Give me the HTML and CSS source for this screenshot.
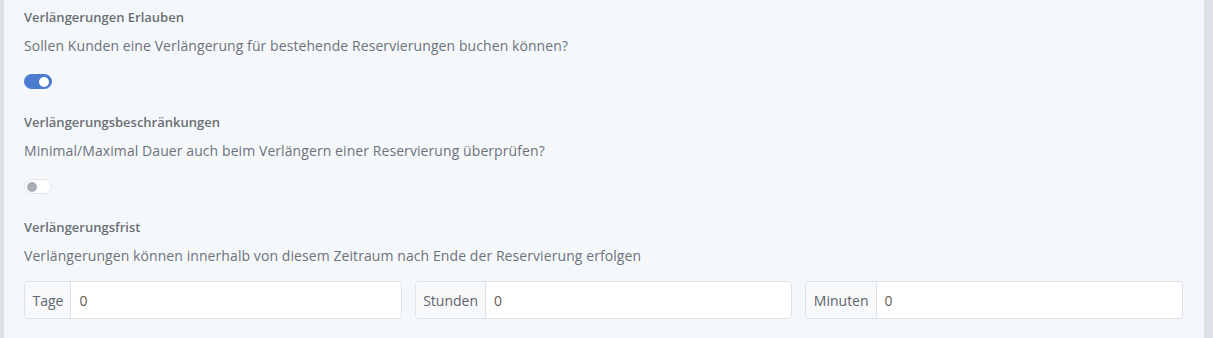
FILE: index.html
```html
<!DOCTYPE html>
<html lang="de">
<head>
<meta charset="utf-8">
<link rel="stylesheet" href="styles.css">
</head>
<body>
<div class="frame">
  <div class="panel">
    <section class="setting">
      <h3 class="title">Verlängerungen Erlauben</h3>
      <p class="desc">Sollen Kunden eine Verlängerung für bestehende Reservierungen buchen können?</p>
      <span class="toggle on"><span class="knob"></span></span>
    </section>
    <section class="setting">
      <h3 class="title">Verlängerungsbeschränkungen</h3>
      <p class="desc">Minimal/Maximal Dauer auch beim Verlängern einer Reservierung überprüfen?</p>
      <span class="toggle"><span class="knob"></span></span>
    </section>
    <section class="setting last">
      <h3 class="title">Verlängerungsfrist</h3>
      <p class="desc">Verlängerungen können innerhalb von diesem Zeitraum nach Ende der Reservierung erfolgen</p>
      <div class="inputs">
        <div class="group"><span class="addon">Tage</span><span class="field">0</span></div>
        <div class="group"><span class="addon">Stunden</span><span class="field">0</span></div>
        <div class="group"><span class="addon">Minuten</span><span class="field">0</span></div>
      </div>
    </section>
  </div>
</div>
</body>
</html>
```

FILE: styles.css
```css
* { box-sizing: border-box; }
html, body { margin: 0; padding: 0; }
body {
  font-family: "Open Sans", "Noto Sans", sans-serif;
  background: #dde1e7;
  height: 338px;
  overflow: hidden;
}
.frame {
  padding: 0 9px 0 4px;
  height: 338px;
}
.panel {
  background: #f5f8fb;
  height: 100%;
  padding: 8px 21px 0 20px;
}
.setting {
  height: 105px;
}
.title {
  margin: 0;
  font-size: 13px;
  font-weight: 600;
  color: #6a6e75;
  line-height: 18px;
}
.desc {
  margin: 10px 0 0;
  font-size: 14px;
  letter-spacing: 0.08px;
  color: #6c727a;
  line-height: 20px;
}
.toggle {
  display: block;
  margin-top: 18px;
  width: 28px;
  height: 15px;
  border-radius: 8px;
  border: 1px solid #dfe3e8;
  background: #fff;
  position: relative;
}
.toggle .knob {
  position: absolute;
  top: 1.5px;
  left: 1.5px;
  width: 10px;
  height: 10px;
  border-radius: 50%;
  background: #a9adb4;
}
.toggle.on {
  background: #4a7bd0;
  border-color: #4a7bd0;
}
.toggle.on .knob {
  left: auto;
  right: 2px;
  background: #fff;
}
.inputs {
  margin-top: 15px;
  display: grid;
  grid-template-columns: 1fr 1fr 1fr;
  gap: 13px;
}
.group {
  display: flex;
  height: 38px;
  border: 1px solid #dde2e8;
  border-radius: 4px;
  background: #fff;
  overflow: hidden;
  font-size: 14px;
  color: #5f646c;
}
.addon {
  display: flex;
  align-items: center;
  padding: 0 7px 0 7.5px;
  background: #f8f9fa;
  border-right: 1px solid #dde2e8;
}
.field {
  display: flex;
  align-items: center;
  padding: 0 8px;
  color: #6a5c50;
}
```
